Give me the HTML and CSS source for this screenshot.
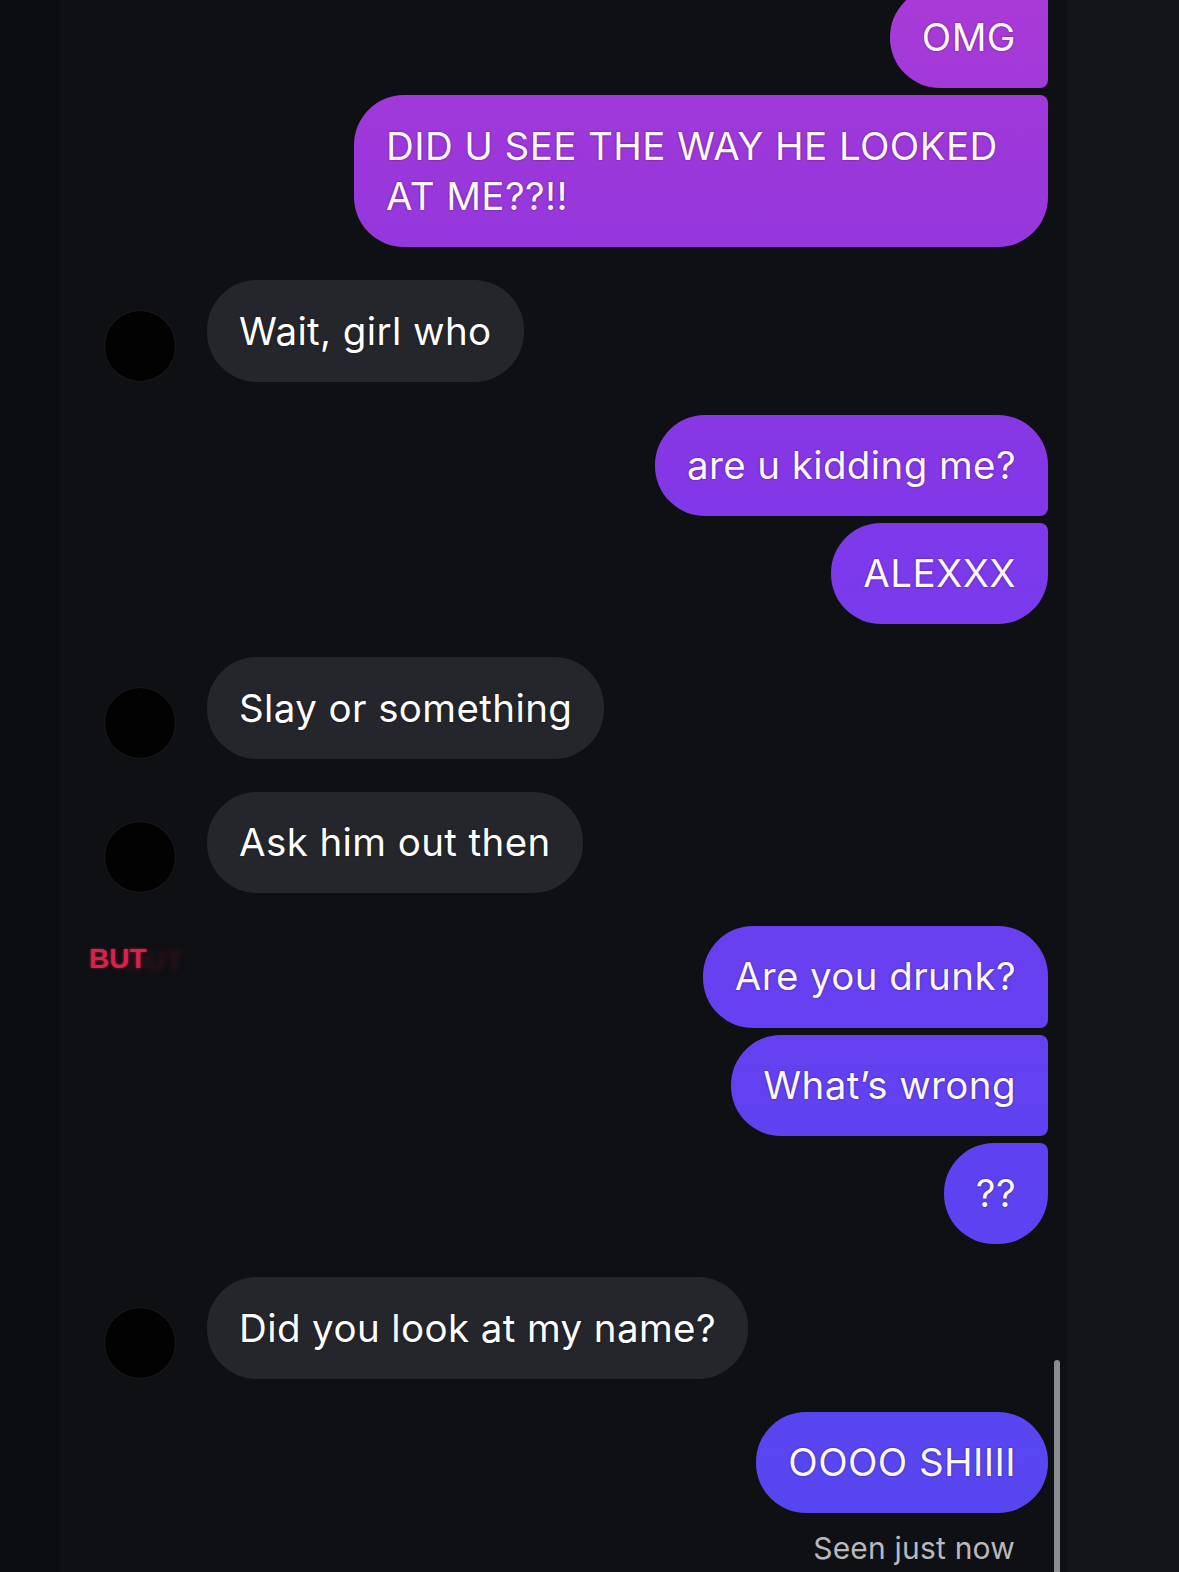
FILE: index.html
```html
<!DOCTYPE html>
<html lang="en">
<head>
<meta charset="utf-8">
<title>Chat</title>
<link rel="stylesheet" href="styles.css">
</head>
<body>
<div class="screen">
  <div class="edge-left"></div>
  <main class="thread">
    <div class="row out first"><div class="bubble mine tail-bottom tail-top">OMG</div></div>
    <div class="row out"><div class="bubble mine wide tail-top">DID U SEE THE WAY HE LOOKED AT ME??!!</div></div>

    <div class="row in new"><div class="avatar"></div><div class="bubble theirs">Wait, girl who</div></div>

    <div class="row out new"><div class="bubble mine tail-bottom">are u kidding me?</div></div>
    <div class="row out"><div class="bubble mine tail-top">ALEXXX</div></div>

    <div class="row in new"><div class="avatar"></div><div class="bubble theirs">Slay or something</div></div>
    <div class="row in new"><div class="avatar"></div><div class="bubble theirs">Ask him out then</div></div>

    <div class="row out new split">
      <span class="caption">BUT</span>
      <div class="bubble mine tail-bottom">Are you drunk?</div>
    </div>
    <div class="row out"><div class="bubble mine tail-top tail-bottom">What’s wrong</div></div>
    <div class="row out"><div class="bubble mine tail-top">??</div></div>

    <div class="row in new"><div class="avatar"></div><div class="bubble theirs">Did you look at my name?</div></div>

    <div class="row out new"><div class="bubble mine">OOOO SHIIII</div></div>
    <div class="seen">Seen just now</div>

    <div class="scrollbar"></div>
  </main>
  <div class="edge-right"></div>
</div>
</body>
</html>
```

FILE: styles.css
```css
html, body {
  margin: 0;
  padding: 0;
  height: 1572px;
  overflow: hidden;
  background: #131418;
}

.screen {
  display: flex;
  height: 1572px;
  font-family: "Inter", "Liberation Sans", sans-serif;
}

.edge-left {
  width: 60px;
  flex: none;
  background: #0c0d10;
}

.edge-right {
  flex: 1;
  background: #141519;
}

.thread {
  position: relative;
  width: 1007px;
  flex: none;
  background: #0f1014;
  padding: 0 19px 0 45px;
  box-sizing: border-box;
  display: flex;
  flex-direction: column;
}

.row {
  display: flex;
  margin-top: 7px;
}

.row.first {
  margin-top: -13.4px;
}

.row.new {
  margin-top: 33px;
}

.row.out {
  justify-content: flex-end;
}

.row.split {
  justify-content: space-between;
  align-items: flex-start;
}

.row.in {
  align-items: flex-end;
  gap: 32px;
}

.avatar {
  width: 70px;
  height: 70px;
  border-radius: 50%;
  background: #020203;
  box-shadow: 0 0 0 1px #19191d;
  margin-bottom: 1px;
  flex: none;
}

.bubble {
  font-size: 38.5px;
  letter-spacing: 0.4px;
  line-height: 51px;
  padding: 25.2px 32px;
  border-radius: 50px;
  color: #fff;
  white-space: nowrap;
  text-shadow: 0 0 2px rgba(0, 0, 0, 0.55);
}

.bubble.wide {
  white-space: normal;
  max-width: 694px;
  box-sizing: border-box;
  line-height: 50px;
  padding: 26.2px 32px;
}

.bubble.mine {
  color: #fdf6ff;
  background-image: linear-gradient(180deg,
    #a93bd7 0px,
    #9a37db 170px,
    #8537e6 465px,
    #7b3aec 570px,
    #6740f0 975px,
    #5d42f1 1190px,
    #5846f0 1455px,
    #5546ef 1572px);
  background-attachment: fixed;
}

.bubble.theirs {
  background: #25262b;
}

.tail-top {
  border-top-right-radius: 8px;
}

.tail-bottom {
  border-bottom-right-radius: 8px;
}

.caption {
  margin: 19px 0 0 -16px;
  font-family: "Liberation Sans", "Inter", sans-serif;
  font-weight: 700;
  font-size: 28px;
  line-height: 28px;
  color: #d8224c;
  text-shadow: 0 0 3px rgba(216, 34, 76, 0.6), 36px 2px 6px rgba(120, 20, 50, 0.35);
}

.seen {
  align-self: flex-end;
  margin: 18px 33px 0 0;
  font-size: 30px;
  line-height: 34px;
  letter-spacing: 0.2px;
  color: #b9b9bd;
}

.scrollbar {
  position: absolute;
  left: 994px;
  top: 1360px;
  width: 6px;
  height: 230px;
  border-radius: 3px;
  background: #8c8c90;
}
```
